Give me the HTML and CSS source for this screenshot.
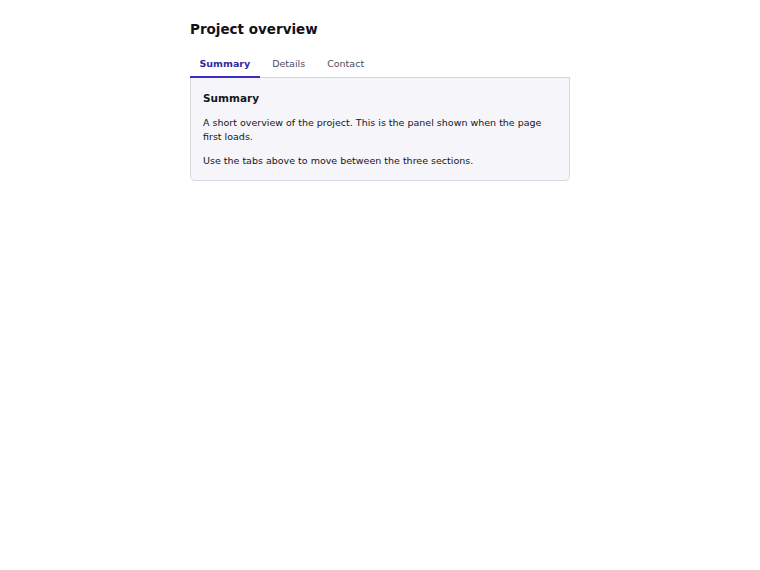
FILE: index.html
```html
<html>
<head>
  <link rel="stylesheet" href="styles.css">
</head>
<body>
<div class="page">
  <h1 class="pageTitle">Project overview</h1>

  <div class="tabList" role="tablist">
    <button class="tab tabActive" role="tab" aria-selected="true">Summary</button>
    <button class="tab" role="tab" aria-selected="false">Details</button>
    <button class="tab" role="tab" aria-selected="false">Contact</button>
  </div>

  <div class="tabPanel" role="tabpanel">
    <h2 class="panelTitle">Summary</h2>
    <p class="panelText">A short overview of the project. This is the panel shown when the page first loads.</p>
    <p class="panelText">Use the tabs above to move between the three sections.</p>
  </div>
</div>
</body>
</html>
```

FILE: styles.css
```css
body {margin:0;background:#fff;font-family:"DejaVu Sans", sans-serif;color:#16161d;}

.page {width:380px;margin:0 auto;padding-top:19px;}
.pageTitle {font-size:13.5px;font-weight:bold;margin:0 0 13px 0;line-height:20px;color:#121218;}

.tabList {display:flex;gap:3px;border-bottom:1px solid #d4d4dc;}
.tab {font-family:inherit;font-size:9.5px;line-height:14px;color:#4d4d5e;background:none;border:none;border-bottom:2px solid transparent;margin-bottom:-1px;padding:5px 9.5px 5px 9.5px;cursor:pointer;}
.tabActive {color:#3428a0;font-weight:bold;border-bottom-color:#3a2cc4;}

.tabPanel {background:#f5f5fa;border:1px solid #d9d9e2;border-top:none;border-radius:0 0 5px 5px;padding:12px 12px 12px 12px;}
.panelTitle {font-size:10.5px;font-weight:bold;margin:0 0 10px 0;line-height:16px;color:#16161d;}
.panelText {font-size:9.5px;line-height:14px;margin:0 0 10px 0;}
.panelText:last-child {margin-bottom:0;}
```
